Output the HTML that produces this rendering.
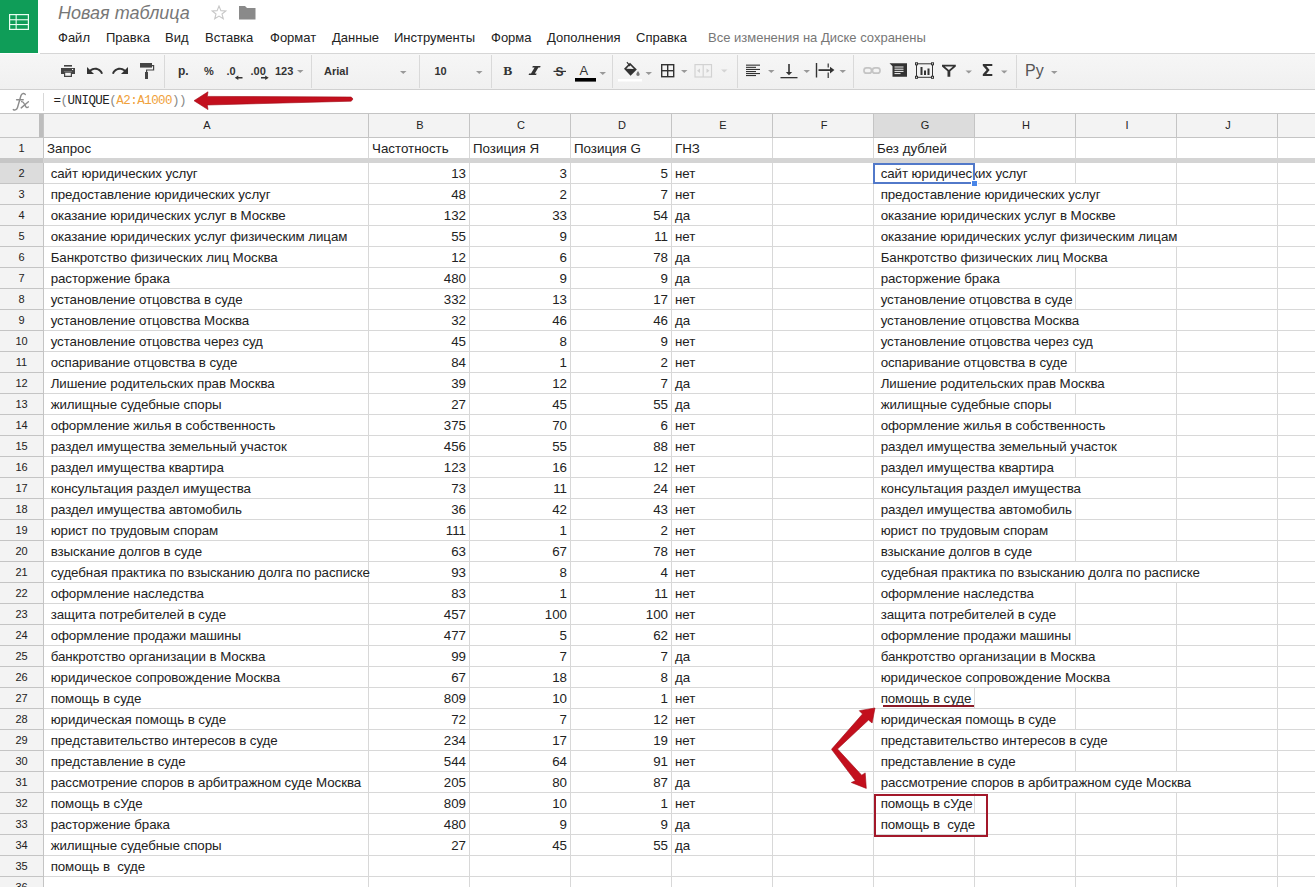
<!DOCTYPE html><html><head><meta charset="utf-8"><title>sheet</title><style>
*{margin:0;padding:0;box-sizing:border-box}
html,body{width:1315px;height:887px;overflow:hidden;background:#fff}
body{position:relative;font-family:"Liberation Sans",sans-serif;color:#222}
.a{position:absolute}
.hl{position:absolute;height:1px}
.vl{position:absolute;width:1px}
.t{position:absolute;white-space:pre;font-size:13.333px;line-height:20px;padding-top:1px;color:#222}
.ls{letter-spacing:-0.07px}
.n{text-align:right}
.rh{position:absolute;left:0;width:43px;text-align:center;font-size:11px;line-height:20px;color:#222}
.ch{position:absolute;top:114px;height:23px;text-align:center;font-size:11px;line-height:23px;color:#222}
.menu{position:absolute;top:30px;font-size:13px;line-height:16px;color:#222;white-space:pre}
.tb{position:absolute}
.dd{position:absolute;top:71px;width:0;height:0;border-left:3px solid transparent;border-right:3px solid transparent;border-top:3px solid #888}
.sep{position:absolute;top:56px;width:1px;height:31px;background:#e0e0e0}
</style></head><body>
<div class="a" style="left:0;top:0;width:38px;height:53px;background:#0f9d58"></div>
<svg class="a" style="left:0;top:0" width="38" height="53" viewBox="0 0 38 53"><g fill="#eafff2"><rect x="9" y="14" width="20" height="1.2"/><rect x="9" y="28.8" width="20" height="1.2"/><rect x="9" y="14" width="1.2" height="16"/><rect x="27.8" y="14" width="1.2" height="16"/><rect x="15.6" y="14" width="1.1" height="16"/><rect x="9" y="19.2" width="20" height="1.1"/><rect x="9" y="24" width="20" height="1.1"/></g></svg>
<div class="a" style="left:58px;top:2px;font-size:18px;line-height:22px;font-style:italic;color:#777;white-space:pre">Новая таблица</div>
<svg class="a" style="left:211px;top:5px" width="16" height="15" viewBox="0 0 16 15"><path d="M8 1 L9.9 5.6 L14.8 5.9 L11 9 L12.3 13.8 L8 11.1 L3.7 13.8 L5 9 L1.2 5.9 L6.1 5.6 Z" fill="none" stroke="#c8c8c8" stroke-width="1.1"/></svg>
<svg class="a" style="left:239px;top:5px" width="17" height="15" viewBox="0 0 17 15"><path d="M0 1 H6 L8 3 H16.5 V14.5 H0 Z" fill="#8a8a8a"/></svg>
<div class="menu" style="left:58px">Файл</div>
<div class="menu" style="left:106px">Правка</div>
<div class="menu" style="left:165px">Вид</div>
<div class="menu" style="left:205px">Вставка</div>
<div class="menu" style="left:270px">Формат</div>
<div class="menu" style="left:332px">Данные</div>
<div class="menu" style="left:394px">Инструменты</div>
<div class="menu" style="left:491px">Форма</div>
<div class="menu" style="left:547px">Дополнения</div>
<div class="menu" style="left:636px">Справка</div>
<div class="menu" style="left:708px;color:#777">Все изменения на Диске сохранены</div>
<div class="a" style="left:40px;top:53px;width:1275px;height:1px;background:#d6d6d6"></div>
<div class="a" style="left:0;top:54px;width:1315px;height:35px;background:linear-gradient(#f6f6f6,#f0f0f0)"></div>
<div class="a" style="left:0;top:89px;width:1315px;height:1px;background:#d0d0d0"></div>
<svg class="a" style="left:0;top:0" width="1315" height="90" viewBox="0 0 1315 90">
<g fill="#d9d9d9">
<rect x="164" y="55" width="1" height="33"/><rect x="311" y="55" width="1" height="33"/><rect x="419" y="55" width="1" height="33"/><rect x="491" y="55" width="1" height="33"/><rect x="612" y="55" width="1" height="33"/><rect x="737" y="55" width="1" height="33"/><rect x="853" y="55" width="1" height="33"/><rect x="1016" y="55" width="1" height="33"/>
</g>
<!-- print -->
<g fill="#444">
<rect x="64" y="65" width="8" height="1.6"/>
<path d="M61 68 H75 V74 H72 V71.5 H64 V74 H61 Z"/>
<path d="M64 71.5 H72 V77 H64 Z M65.2 72.7 V75.8 H70.8 V72.7 Z"/>
<rect x="72" y="69" width="1.2" height="1" fill="#fff"/>
</g>
<!-- undo -->
<path transform="translate(85.44 61.54) scale(0.78)" d="M12.5 8c-2.65 0-5.05.99-6.9 2.6L2 7v9h9l-3.62-3.62c1.39-1.16 3.16-1.88 5.12-1.88 3.54 0 6.55 2.31 7.6 5.5l2.37-.78C21.08 11.03 17.15 8 12.5 8z" fill="#333"/>
<!-- redo -->
<path transform="translate(110.84 61.54) scale(0.78)" d="M18.4 10.6C16.55 8.99 14.15 8 11.5 8c-4.65 0-8.58 3.03-9.96 7.22L3.9 16c1.05-3.19 4.05-5.5 7.6-5.5 1.95 0 3.73.72 5.12 1.88L13 16h9V7l-3.6 3.6z" fill="#333"/>
<!-- paint roller -->
<g fill="#444">
<rect x="140" y="63" width="12" height="4.6"/>
<path d="M152 65 H154.2 V70.6 H147.2 V72 H146 V69.5 H153 V66.2 H152 Z"/>
<rect x="145" y="72" width="3" height="7"/>
</g>
<g font-family="Liberation Sans" font-weight="bold" fill="#333">
<text x="178" y="75" font-size="12">р.</text>
<text x="204" y="75" font-size="11">%</text>
<text x="226.5" y="75" font-size="11">.0</text>
<text x="250.5" y="75" font-size="11">.00</text>
<text x="275" y="75" font-size="11">123</text>
<text x="324" y="75" font-size="11">Arial</text>
<text x="434.5" y="75" font-size="11">10</text>
</g>
<g fill="#333">
<path d="M234.8 77.8 L238.3 75.6 V77 H242.5 V78.6 H238.3 V80 Z"/>
<path d="M268.7 77.8 L265.2 75.6 V77 H261 V78.6 H265.2 V80 Z"/>
</g>
<!-- dropdown arrows -->
<g fill="#999">
<path d="M297 70 H303.5 L300.25 73 Z"/>
<path d="M400 71 H406.5 L403.25 74 Z"/>
<path d="M476 71 H482.5 L479.25 74 Z"/>
<path d="M599.5 72 H606 L602.75 75 Z"/>
<path d="M645.5 72 H652 L648.75 75 Z"/>
<path d="M681 70 H687.5 L684.25 73 Z"/>
<path d="M768 70 H774.5 L771.25 73 Z"/>
<path d="M803.5 70 H810 L806.75 73 Z"/>
<path d="M839.5 70 H846 L842.75 73 Z"/>
<path d="M965.5 70.5 H972 L968.75 73.5 Z"/>
<path d="M1001 70.5 H1007.5 L1004.25 73.5 Z"/>
<path d="M1051 71 H1057.5 L1054.25 74 Z"/>
</g>
<path d="M721 69.5 H727.5 L724.25 72.5 Z" fill="#d4d4d4"/>
<!-- B I S A -->
<text x="503.2" y="75.2" font-family="Liberation Serif" font-weight="bold" font-size="13.5" fill="#333">B</text>
<path d="M532.8 66 H540.6 L540.1 67.6 H538.4 L534.8 73.4 H536.6 L536.1 75 H528.6 L529.1 73.4 H531 L534.6 67.6 H532.3 Z" fill="#333"/>
<text x="555.6" y="75.5" font-family="Liberation Sans" font-weight="bold" font-size="12" fill="#333">S</text>
<rect x="553.5" y="70.8" width="12.5" height="1.2" fill="#333"/>
<text x="579.5" y="75" font-family="Liberation Sans" font-size="13" fill="#333">A</text>
<rect x="575" y="78" width="21" height="3.6" fill="#000"/>
<!-- bucket -->
<g fill="#333">
<path d="M624 68.8 L630 62.8 L636.8 69.6 L630.6 75.8 Z"/>
<path d="M626.3 68.8 L630 65.1 L633.9 69 Z" fill="#f3f3f3"/>
<path d="M629.5 66.5 L626.5 62.5 L627.3 61.8 L630.6 65.5 Z"/>
<path d="M638 71 C637 72.7 636.3 73.5 636.3 74.3 A1.7 1.7 0 0 0 639.7 74.3 C639.7 73.5 639 72.7 638 71 Z" fill="#777"/>
</g>
<rect x="618" y="79" width="24" height="2.5" fill="#fff"/>
<!-- borders -->
<g fill="none" stroke="#333" stroke-width="1.4">
<rect x="661.7" y="64.7" width="12" height="12"/><line x1="667.7" y1="64.7" x2="667.7" y2="76.7"/><line x1="661.7" y1="70.7" x2="673.7" y2="70.7"/>
</g>
<!-- merge (disabled) -->
<g fill="none" stroke="#d2d2d2" stroke-width="1.2">
<rect x="695" y="64.6" width="16.5" height="12.4"/><line x1="703.2" y1="64.6" x2="703.2" y2="77"/>
</g>
<g fill="#d2d2d2"><path d="M697 70.8 L700 68.5 V73.1 Z"/><path d="M709.5 70.8 L706.5 68.5 V73.1 Z"/></g>
<!-- align left -->
<g fill="#333">
<rect x="746" y="64.6" width="14" height="1.1"/><rect x="746" y="66.8" width="10" height="1.1"/><rect x="746" y="68.9" width="14" height="1.1"/><rect x="746" y="71" width="10" height="1.1"/><rect x="746" y="73" width="14" height="1.1"/><rect x="746" y="75" width="10" height="1.1"/>
</g>
<!-- valign bottom -->
<g fill="#333">
<rect x="788.2" y="64" width="1.6" height="9"/>
<path d="M785.8 72 H792.2 L789 75.2 Z"/>
<rect x="780.5" y="77" width="17" height="1.3"/>
</g>
<!-- wrap -->
<g fill="#333">
<rect x="815.8" y="63" width="1.4" height="14.5"/>
<rect x="818.5" y="69.2" width="12" height="1.8"/>
<path d="M830 66.8 L834.4 70.1 L830 73.4 Z"/>
<rect x="827.6" y="63.5" width="1.2" height="4"/><rect x="827.6" y="72.5" width="1.2" height="5.5"/>
</g>
<!-- link disabled -->
<g fill="none" stroke="#c4c4c4" stroke-width="1.7">
<rect x="864" y="67.8" width="7.5" height="5.4" rx="2.5"/><rect x="872.5" y="67.8" width="7.5" height="5.4" rx="2.5"/>
</g>
<!-- comment -->
<path d="M889.5 63.2 H907 V76.8 H892.5 V66.2 Z" fill="#333"/>
<g fill="#f3f3f3"><rect x="894.5" y="66.5" width="9" height="1"/><rect x="894.5" y="68.7" width="9" height="1"/><rect x="894.5" y="70.9" width="9" height="1"/><rect x="894.5" y="73.1" width="6" height="1"/></g>
<!-- chart -->
<g fill="none" stroke="#333" stroke-width="1"><rect x="916.5" y="63.8" width="16" height="13.5"/></g>
<g fill="#333">
<rect x="915" y="62.3" width="3" height="3"/><rect x="931" y="62.3" width="3" height="3"/><rect x="915" y="75.8" width="3" height="3"/><rect x="931" y="75.8" width="3" height="3"/>
<rect x="920.5" y="67" width="2" height="8"/><rect x="924" y="70.5" width="2" height="4.5"/><rect x="927.5" y="68.5" width="2" height="6.5"/>
</g>
<g fill="#f3f3f3"><rect x="916" y="63.3" width="1" height="1"/><rect x="932" y="63.3" width="1" height="1"/><rect x="916" y="76.8" width="1" height="1"/><rect x="932" y="76.8" width="1" height="1"/></g>
<!-- filter -->
<path d="M942 64.8 H955.8 V66.6 L950.3 71.2 V76.8 H947.5 V71.2 L942 66.6 Z M944.8 66.6 L948.9 70 L953 66.6 Z" fill="#333" fill-rule="evenodd"/>
<!-- sigma -->
<path d="M982.8 64 H992.3 V66.1 H986.3 L989.6 70 L986.3 73.9 H992.3 V76 H982.8 V74.2 L986.6 70 L982.8 65.8 Z" fill="#333"/>
<text x="1025" y="76" font-family="Liberation Sans" font-size="16" fill="#555">Ру</text>
</svg>

<svg class="a" style="left:0;top:88px" width="43" height="25" viewBox="0 88 43 25"><g fill="none" stroke="#8c8c8c" stroke-width="1.4" stroke-linecap="round"><path d="M25.3 94.6 C24.6 92.9 21.7 92.9 20.9 95.8 L17.6 107.3 C17 109.6 15 110.6 13.3 109.6"/><path d="M16.6 99.8 H23.2"/><path d="M21.6 101.6 C23 101.4 23.6 102.2 24.4 104 L25.6 106.4 C26.3 107.6 27.2 107.8 28.4 107"/><path d="M28.4 101.8 L21.2 107.9"/></g></svg>
<div class="a" style="left:43px;top:93px;width:1px;height:18px;background:#d8d8d8"></div>
<div class="a" style="left:53.5px;top:92px;font-family:'Liberation Mono',monospace;font-size:12.5px;letter-spacing:-0.53px;line-height:18px;white-space:pre;color:#222">=<span style="color:#888">(</span>UNIQUE<span style="color:#888">(</span><span style="color:#f0a23c">A2:A1000</span><span style="color:#888">))</span></div>
<div class="a" style="left:0;top:113px;width:1315px;height:1px;background:#c4c4c4"></div>
<div class="a" style="left:0;top:114px;width:1315px;height:23px;background:#f3f3f3"></div>
<div class="a" style="left:874px;top:114px;width:100px;height:23px;background:#dcdcdc"></div>
<div class="a" style="left:0;top:137px;width:1315px;height:1px;background:#c4c4c4"></div>
<div class="a" style="left:0;top:138px;width:43px;height:749px;background:#f3f3f3"></div>
<div class="a" style="left:0;top:163px;width:43px;height:20px;background:#dcdcdc"></div>
<div class="vl" style="left:368px;top:113px;height:24px;background:#c4c4c4"></div>
<div class="vl" style="left:469px;top:113px;height:24px;background:#c4c4c4"></div>
<div class="vl" style="left:570px;top:113px;height:24px;background:#c4c4c4"></div>
<div class="vl" style="left:671px;top:113px;height:24px;background:#c4c4c4"></div>
<div class="vl" style="left:772px;top:113px;height:24px;background:#c4c4c4"></div>
<div class="vl" style="left:873px;top:113px;height:24px;background:#c4c4c4"></div>
<div class="vl" style="left:974px;top:113px;height:24px;background:#c4c4c4"></div>
<div class="vl" style="left:1075px;top:113px;height:24px;background:#c4c4c4"></div>
<div class="vl" style="left:1176px;top:113px;height:24px;background:#c4c4c4"></div>
<div class="vl" style="left:1277px;top:113px;height:24px;background:#c4c4c4"></div>
<div class="vl" style="left:43px;top:113px;height:774px;background:#c4c4c4"></div>
<div class="a" style="left:39px;top:114px;width:4px;height:23px;background:#bdbdbd"></div>
<div class="ch" style="left:45px;width:324px">A</div>
<div class="ch" style="left:370px;width:100px">B</div>
<div class="ch" style="left:471px;width:100px">C</div>
<div class="ch" style="left:572px;width:100px">D</div>
<div class="ch" style="left:673px;width:100px">E</div>
<div class="ch" style="left:774px;width:100px">F</div>
<div class="ch" style="left:875px;width:100px">G</div>
<div class="ch" style="left:976px;width:100px">H</div>
<div class="ch" style="left:1077px;width:100px">I</div>
<div class="ch" style="left:1178px;width:100px">J</div>
<div class="a" style="left:0;top:158px;width:1315px;height:5px;background:#d4d4d4"></div>
<div class="a" style="left:0;top:158px;width:43px;height:5px;background:#c6c6c6"></div>
<div class="hl" style="left:0;top:183px;width:43px;background:#c4c4c4"></div>
<div class="hl" style="left:44px;top:183px;width:1271px;background:#d8d8d8"></div>
<div class="hl" style="left:0;top:204px;width:43px;background:#c4c4c4"></div>
<div class="hl" style="left:44px;top:204px;width:1271px;background:#d8d8d8"></div>
<div class="hl" style="left:0;top:225px;width:43px;background:#c4c4c4"></div>
<div class="hl" style="left:44px;top:225px;width:1271px;background:#d8d8d8"></div>
<div class="hl" style="left:0;top:246px;width:43px;background:#c4c4c4"></div>
<div class="hl" style="left:44px;top:246px;width:1271px;background:#d8d8d8"></div>
<div class="hl" style="left:0;top:267px;width:43px;background:#c4c4c4"></div>
<div class="hl" style="left:44px;top:267px;width:1271px;background:#d8d8d8"></div>
<div class="hl" style="left:0;top:288px;width:43px;background:#c4c4c4"></div>
<div class="hl" style="left:44px;top:288px;width:1271px;background:#d8d8d8"></div>
<div class="hl" style="left:0;top:309px;width:43px;background:#c4c4c4"></div>
<div class="hl" style="left:44px;top:309px;width:1271px;background:#d8d8d8"></div>
<div class="hl" style="left:0;top:330px;width:43px;background:#c4c4c4"></div>
<div class="hl" style="left:44px;top:330px;width:1271px;background:#d8d8d8"></div>
<div class="hl" style="left:0;top:351px;width:43px;background:#c4c4c4"></div>
<div class="hl" style="left:44px;top:351px;width:1271px;background:#d8d8d8"></div>
<div class="hl" style="left:0;top:372px;width:43px;background:#c4c4c4"></div>
<div class="hl" style="left:44px;top:372px;width:1271px;background:#d8d8d8"></div>
<div class="hl" style="left:0;top:393px;width:43px;background:#c4c4c4"></div>
<div class="hl" style="left:44px;top:393px;width:1271px;background:#d8d8d8"></div>
<div class="hl" style="left:0;top:414px;width:43px;background:#c4c4c4"></div>
<div class="hl" style="left:44px;top:414px;width:1271px;background:#d8d8d8"></div>
<div class="hl" style="left:0;top:435px;width:43px;background:#c4c4c4"></div>
<div class="hl" style="left:44px;top:435px;width:1271px;background:#d8d8d8"></div>
<div class="hl" style="left:0;top:456px;width:43px;background:#c4c4c4"></div>
<div class="hl" style="left:44px;top:456px;width:1271px;background:#d8d8d8"></div>
<div class="hl" style="left:0;top:477px;width:43px;background:#c4c4c4"></div>
<div class="hl" style="left:44px;top:477px;width:1271px;background:#d8d8d8"></div>
<div class="hl" style="left:0;top:498px;width:43px;background:#c4c4c4"></div>
<div class="hl" style="left:44px;top:498px;width:1271px;background:#d8d8d8"></div>
<div class="hl" style="left:0;top:519px;width:43px;background:#c4c4c4"></div>
<div class="hl" style="left:44px;top:519px;width:1271px;background:#d8d8d8"></div>
<div class="hl" style="left:0;top:540px;width:43px;background:#c4c4c4"></div>
<div class="hl" style="left:44px;top:540px;width:1271px;background:#d8d8d8"></div>
<div class="hl" style="left:0;top:561px;width:43px;background:#c4c4c4"></div>
<div class="hl" style="left:44px;top:561px;width:1271px;background:#d8d8d8"></div>
<div class="hl" style="left:0;top:582px;width:43px;background:#c4c4c4"></div>
<div class="hl" style="left:44px;top:582px;width:1271px;background:#d8d8d8"></div>
<div class="hl" style="left:0;top:603px;width:43px;background:#c4c4c4"></div>
<div class="hl" style="left:44px;top:603px;width:1271px;background:#d8d8d8"></div>
<div class="hl" style="left:0;top:624px;width:43px;background:#c4c4c4"></div>
<div class="hl" style="left:44px;top:624px;width:1271px;background:#d8d8d8"></div>
<div class="hl" style="left:0;top:645px;width:43px;background:#c4c4c4"></div>
<div class="hl" style="left:44px;top:645px;width:1271px;background:#d8d8d8"></div>
<div class="hl" style="left:0;top:666px;width:43px;background:#c4c4c4"></div>
<div class="hl" style="left:44px;top:666px;width:1271px;background:#d8d8d8"></div>
<div class="hl" style="left:0;top:687px;width:43px;background:#c4c4c4"></div>
<div class="hl" style="left:44px;top:687px;width:1271px;background:#d8d8d8"></div>
<div class="hl" style="left:0;top:708px;width:43px;background:#c4c4c4"></div>
<div class="hl" style="left:44px;top:708px;width:1271px;background:#d8d8d8"></div>
<div class="hl" style="left:0;top:729px;width:43px;background:#c4c4c4"></div>
<div class="hl" style="left:44px;top:729px;width:1271px;background:#d8d8d8"></div>
<div class="hl" style="left:0;top:750px;width:43px;background:#c4c4c4"></div>
<div class="hl" style="left:44px;top:750px;width:1271px;background:#d8d8d8"></div>
<div class="hl" style="left:0;top:771px;width:43px;background:#c4c4c4"></div>
<div class="hl" style="left:44px;top:771px;width:1271px;background:#d8d8d8"></div>
<div class="hl" style="left:0;top:792px;width:43px;background:#c4c4c4"></div>
<div class="hl" style="left:44px;top:792px;width:1271px;background:#d8d8d8"></div>
<div class="hl" style="left:0;top:813px;width:43px;background:#c4c4c4"></div>
<div class="hl" style="left:44px;top:813px;width:1271px;background:#d8d8d8"></div>
<div class="hl" style="left:0;top:834px;width:43px;background:#c4c4c4"></div>
<div class="hl" style="left:44px;top:834px;width:1271px;background:#d8d8d8"></div>
<div class="hl" style="left:0;top:855px;width:43px;background:#c4c4c4"></div>
<div class="hl" style="left:44px;top:855px;width:1271px;background:#d8d8d8"></div>
<div class="hl" style="left:0;top:876px;width:43px;background:#c4c4c4"></div>
<div class="hl" style="left:44px;top:876px;width:1271px;background:#d8d8d8"></div>
<div class="vl" style="left:368px;top:138px;height:20px;background:#d8d8d8"></div>
<div class="vl" style="left:469px;top:138px;height:20px;background:#d8d8d8"></div>
<div class="vl" style="left:570px;top:138px;height:20px;background:#d8d8d8"></div>
<div class="vl" style="left:671px;top:138px;height:20px;background:#d8d8d8"></div>
<div class="vl" style="left:772px;top:138px;height:20px;background:#d8d8d8"></div>
<div class="vl" style="left:873px;top:138px;height:20px;background:#d8d8d8"></div>
<div class="vl" style="left:974px;top:138px;height:20px;background:#d8d8d8"></div>
<div class="vl" style="left:1075px;top:138px;height:20px;background:#d8d8d8"></div>
<div class="vl" style="left:1176px;top:138px;height:20px;background:#d8d8d8"></div>
<div class="vl" style="left:1277px;top:138px;height:20px;background:#d8d8d8"></div>
<div class="vl" style="left:368px;top:163px;height:20px;background:#d8d8d8"></div>
<div class="vl" style="left:469px;top:163px;height:20px;background:#d8d8d8"></div>
<div class="vl" style="left:570px;top:163px;height:20px;background:#d8d8d8"></div>
<div class="vl" style="left:671px;top:163px;height:20px;background:#d8d8d8"></div>
<div class="vl" style="left:772px;top:163px;height:20px;background:#d8d8d8"></div>
<div class="vl" style="left:873px;top:163px;height:20px;background:#d8d8d8"></div>
<div class="vl" style="left:1075px;top:163px;height:20px;background:#d8d8d8"></div>
<div class="vl" style="left:1176px;top:163px;height:20px;background:#d8d8d8"></div>
<div class="vl" style="left:1277px;top:163px;height:20px;background:#d8d8d8"></div>
<div class="vl" style="left:368px;top:184px;height:20px;background:#d8d8d8"></div>
<div class="vl" style="left:469px;top:184px;height:20px;background:#d8d8d8"></div>
<div class="vl" style="left:570px;top:184px;height:20px;background:#d8d8d8"></div>
<div class="vl" style="left:671px;top:184px;height:20px;background:#d8d8d8"></div>
<div class="vl" style="left:772px;top:184px;height:20px;background:#d8d8d8"></div>
<div class="vl" style="left:873px;top:184px;height:20px;background:#d8d8d8"></div>
<div class="vl" style="left:1176px;top:184px;height:20px;background:#d8d8d8"></div>
<div class="vl" style="left:1277px;top:184px;height:20px;background:#d8d8d8"></div>
<div class="vl" style="left:368px;top:205px;height:20px;background:#d8d8d8"></div>
<div class="vl" style="left:469px;top:205px;height:20px;background:#d8d8d8"></div>
<div class="vl" style="left:570px;top:205px;height:20px;background:#d8d8d8"></div>
<div class="vl" style="left:671px;top:205px;height:20px;background:#d8d8d8"></div>
<div class="vl" style="left:772px;top:205px;height:20px;background:#d8d8d8"></div>
<div class="vl" style="left:873px;top:205px;height:20px;background:#d8d8d8"></div>
<div class="vl" style="left:1176px;top:205px;height:20px;background:#d8d8d8"></div>
<div class="vl" style="left:1277px;top:205px;height:20px;background:#d8d8d8"></div>
<div class="vl" style="left:368px;top:226px;height:20px;background:#d8d8d8"></div>
<div class="vl" style="left:469px;top:226px;height:20px;background:#d8d8d8"></div>
<div class="vl" style="left:570px;top:226px;height:20px;background:#d8d8d8"></div>
<div class="vl" style="left:671px;top:226px;height:20px;background:#d8d8d8"></div>
<div class="vl" style="left:772px;top:226px;height:20px;background:#d8d8d8"></div>
<div class="vl" style="left:873px;top:226px;height:20px;background:#d8d8d8"></div>
<div class="vl" style="left:1277px;top:226px;height:20px;background:#d8d8d8"></div>
<div class="vl" style="left:368px;top:247px;height:20px;background:#d8d8d8"></div>
<div class="vl" style="left:469px;top:247px;height:20px;background:#d8d8d8"></div>
<div class="vl" style="left:570px;top:247px;height:20px;background:#d8d8d8"></div>
<div class="vl" style="left:671px;top:247px;height:20px;background:#d8d8d8"></div>
<div class="vl" style="left:772px;top:247px;height:20px;background:#d8d8d8"></div>
<div class="vl" style="left:873px;top:247px;height:20px;background:#d8d8d8"></div>
<div class="vl" style="left:1176px;top:247px;height:20px;background:#d8d8d8"></div>
<div class="vl" style="left:1277px;top:247px;height:20px;background:#d8d8d8"></div>
<div class="vl" style="left:368px;top:268px;height:20px;background:#d8d8d8"></div>
<div class="vl" style="left:469px;top:268px;height:20px;background:#d8d8d8"></div>
<div class="vl" style="left:570px;top:268px;height:20px;background:#d8d8d8"></div>
<div class="vl" style="left:671px;top:268px;height:20px;background:#d8d8d8"></div>
<div class="vl" style="left:772px;top:268px;height:20px;background:#d8d8d8"></div>
<div class="vl" style="left:873px;top:268px;height:20px;background:#d8d8d8"></div>
<div class="vl" style="left:1075px;top:268px;height:20px;background:#d8d8d8"></div>
<div class="vl" style="left:1176px;top:268px;height:20px;background:#d8d8d8"></div>
<div class="vl" style="left:1277px;top:268px;height:20px;background:#d8d8d8"></div>
<div class="vl" style="left:368px;top:289px;height:20px;background:#d8d8d8"></div>
<div class="vl" style="left:469px;top:289px;height:20px;background:#d8d8d8"></div>
<div class="vl" style="left:570px;top:289px;height:20px;background:#d8d8d8"></div>
<div class="vl" style="left:671px;top:289px;height:20px;background:#d8d8d8"></div>
<div class="vl" style="left:772px;top:289px;height:20px;background:#d8d8d8"></div>
<div class="vl" style="left:873px;top:289px;height:20px;background:#d8d8d8"></div>
<div class="vl" style="left:1075px;top:289px;height:20px;background:#d8d8d8"></div>
<div class="vl" style="left:1176px;top:289px;height:20px;background:#d8d8d8"></div>
<div class="vl" style="left:1277px;top:289px;height:20px;background:#d8d8d8"></div>
<div class="vl" style="left:368px;top:310px;height:20px;background:#d8d8d8"></div>
<div class="vl" style="left:469px;top:310px;height:20px;background:#d8d8d8"></div>
<div class="vl" style="left:570px;top:310px;height:20px;background:#d8d8d8"></div>
<div class="vl" style="left:671px;top:310px;height:20px;background:#d8d8d8"></div>
<div class="vl" style="left:772px;top:310px;height:20px;background:#d8d8d8"></div>
<div class="vl" style="left:873px;top:310px;height:20px;background:#d8d8d8"></div>
<div class="vl" style="left:1176px;top:310px;height:20px;background:#d8d8d8"></div>
<div class="vl" style="left:1277px;top:310px;height:20px;background:#d8d8d8"></div>
<div class="vl" style="left:368px;top:331px;height:20px;background:#d8d8d8"></div>
<div class="vl" style="left:469px;top:331px;height:20px;background:#d8d8d8"></div>
<div class="vl" style="left:570px;top:331px;height:20px;background:#d8d8d8"></div>
<div class="vl" style="left:671px;top:331px;height:20px;background:#d8d8d8"></div>
<div class="vl" style="left:772px;top:331px;height:20px;background:#d8d8d8"></div>
<div class="vl" style="left:873px;top:331px;height:20px;background:#d8d8d8"></div>
<div class="vl" style="left:1176px;top:331px;height:20px;background:#d8d8d8"></div>
<div class="vl" style="left:1277px;top:331px;height:20px;background:#d8d8d8"></div>
<div class="vl" style="left:368px;top:352px;height:20px;background:#d8d8d8"></div>
<div class="vl" style="left:469px;top:352px;height:20px;background:#d8d8d8"></div>
<div class="vl" style="left:570px;top:352px;height:20px;background:#d8d8d8"></div>
<div class="vl" style="left:671px;top:352px;height:20px;background:#d8d8d8"></div>
<div class="vl" style="left:772px;top:352px;height:20px;background:#d8d8d8"></div>
<div class="vl" style="left:873px;top:352px;height:20px;background:#d8d8d8"></div>
<div class="vl" style="left:1075px;top:352px;height:20px;background:#d8d8d8"></div>
<div class="vl" style="left:1176px;top:352px;height:20px;background:#d8d8d8"></div>
<div class="vl" style="left:1277px;top:352px;height:20px;background:#d8d8d8"></div>
<div class="vl" style="left:368px;top:373px;height:20px;background:#d8d8d8"></div>
<div class="vl" style="left:469px;top:373px;height:20px;background:#d8d8d8"></div>
<div class="vl" style="left:570px;top:373px;height:20px;background:#d8d8d8"></div>
<div class="vl" style="left:671px;top:373px;height:20px;background:#d8d8d8"></div>
<div class="vl" style="left:772px;top:373px;height:20px;background:#d8d8d8"></div>
<div class="vl" style="left:873px;top:373px;height:20px;background:#d8d8d8"></div>
<div class="vl" style="left:1176px;top:373px;height:20px;background:#d8d8d8"></div>
<div class="vl" style="left:1277px;top:373px;height:20px;background:#d8d8d8"></div>
<div class="vl" style="left:368px;top:394px;height:20px;background:#d8d8d8"></div>
<div class="vl" style="left:469px;top:394px;height:20px;background:#d8d8d8"></div>
<div class="vl" style="left:570px;top:394px;height:20px;background:#d8d8d8"></div>
<div class="vl" style="left:671px;top:394px;height:20px;background:#d8d8d8"></div>
<div class="vl" style="left:772px;top:394px;height:20px;background:#d8d8d8"></div>
<div class="vl" style="left:873px;top:394px;height:20px;background:#d8d8d8"></div>
<div class="vl" style="left:1075px;top:394px;height:20px;background:#d8d8d8"></div>
<div class="vl" style="left:1176px;top:394px;height:20px;background:#d8d8d8"></div>
<div class="vl" style="left:1277px;top:394px;height:20px;background:#d8d8d8"></div>
<div class="vl" style="left:368px;top:415px;height:20px;background:#d8d8d8"></div>
<div class="vl" style="left:469px;top:415px;height:20px;background:#d8d8d8"></div>
<div class="vl" style="left:570px;top:415px;height:20px;background:#d8d8d8"></div>
<div class="vl" style="left:671px;top:415px;height:20px;background:#d8d8d8"></div>
<div class="vl" style="left:772px;top:415px;height:20px;background:#d8d8d8"></div>
<div class="vl" style="left:873px;top:415px;height:20px;background:#d8d8d8"></div>
<div class="vl" style="left:1176px;top:415px;height:20px;background:#d8d8d8"></div>
<div class="vl" style="left:1277px;top:415px;height:20px;background:#d8d8d8"></div>
<div class="vl" style="left:368px;top:436px;height:20px;background:#d8d8d8"></div>
<div class="vl" style="left:469px;top:436px;height:20px;background:#d8d8d8"></div>
<div class="vl" style="left:570px;top:436px;height:20px;background:#d8d8d8"></div>
<div class="vl" style="left:671px;top:436px;height:20px;background:#d8d8d8"></div>
<div class="vl" style="left:772px;top:436px;height:20px;background:#d8d8d8"></div>
<div class="vl" style="left:873px;top:436px;height:20px;background:#d8d8d8"></div>
<div class="vl" style="left:1176px;top:436px;height:20px;background:#d8d8d8"></div>
<div class="vl" style="left:1277px;top:436px;height:20px;background:#d8d8d8"></div>
<div class="vl" style="left:368px;top:457px;height:20px;background:#d8d8d8"></div>
<div class="vl" style="left:469px;top:457px;height:20px;background:#d8d8d8"></div>
<div class="vl" style="left:570px;top:457px;height:20px;background:#d8d8d8"></div>
<div class="vl" style="left:671px;top:457px;height:20px;background:#d8d8d8"></div>
<div class="vl" style="left:772px;top:457px;height:20px;background:#d8d8d8"></div>
<div class="vl" style="left:873px;top:457px;height:20px;background:#d8d8d8"></div>
<div class="vl" style="left:1075px;top:457px;height:20px;background:#d8d8d8"></div>
<div class="vl" style="left:1176px;top:457px;height:20px;background:#d8d8d8"></div>
<div class="vl" style="left:1277px;top:457px;height:20px;background:#d8d8d8"></div>
<div class="vl" style="left:368px;top:478px;height:20px;background:#d8d8d8"></div>
<div class="vl" style="left:469px;top:478px;height:20px;background:#d8d8d8"></div>
<div class="vl" style="left:570px;top:478px;height:20px;background:#d8d8d8"></div>
<div class="vl" style="left:671px;top:478px;height:20px;background:#d8d8d8"></div>
<div class="vl" style="left:772px;top:478px;height:20px;background:#d8d8d8"></div>
<div class="vl" style="left:873px;top:478px;height:20px;background:#d8d8d8"></div>
<div class="vl" style="left:1176px;top:478px;height:20px;background:#d8d8d8"></div>
<div class="vl" style="left:1277px;top:478px;height:20px;background:#d8d8d8"></div>
<div class="vl" style="left:368px;top:499px;height:20px;background:#d8d8d8"></div>
<div class="vl" style="left:469px;top:499px;height:20px;background:#d8d8d8"></div>
<div class="vl" style="left:570px;top:499px;height:20px;background:#d8d8d8"></div>
<div class="vl" style="left:671px;top:499px;height:20px;background:#d8d8d8"></div>
<div class="vl" style="left:772px;top:499px;height:20px;background:#d8d8d8"></div>
<div class="vl" style="left:873px;top:499px;height:20px;background:#d8d8d8"></div>
<div class="vl" style="left:1075px;top:499px;height:20px;background:#d8d8d8"></div>
<div class="vl" style="left:1176px;top:499px;height:20px;background:#d8d8d8"></div>
<div class="vl" style="left:1277px;top:499px;height:20px;background:#d8d8d8"></div>
<div class="vl" style="left:368px;top:520px;height:20px;background:#d8d8d8"></div>
<div class="vl" style="left:469px;top:520px;height:20px;background:#d8d8d8"></div>
<div class="vl" style="left:570px;top:520px;height:20px;background:#d8d8d8"></div>
<div class="vl" style="left:671px;top:520px;height:20px;background:#d8d8d8"></div>
<div class="vl" style="left:772px;top:520px;height:20px;background:#d8d8d8"></div>
<div class="vl" style="left:873px;top:520px;height:20px;background:#d8d8d8"></div>
<div class="vl" style="left:1075px;top:520px;height:20px;background:#d8d8d8"></div>
<div class="vl" style="left:1176px;top:520px;height:20px;background:#d8d8d8"></div>
<div class="vl" style="left:1277px;top:520px;height:20px;background:#d8d8d8"></div>
<div class="vl" style="left:368px;top:541px;height:20px;background:#d8d8d8"></div>
<div class="vl" style="left:469px;top:541px;height:20px;background:#d8d8d8"></div>
<div class="vl" style="left:570px;top:541px;height:20px;background:#d8d8d8"></div>
<div class="vl" style="left:671px;top:541px;height:20px;background:#d8d8d8"></div>
<div class="vl" style="left:772px;top:541px;height:20px;background:#d8d8d8"></div>
<div class="vl" style="left:873px;top:541px;height:20px;background:#d8d8d8"></div>
<div class="vl" style="left:1075px;top:541px;height:20px;background:#d8d8d8"></div>
<div class="vl" style="left:1176px;top:541px;height:20px;background:#d8d8d8"></div>
<div class="vl" style="left:1277px;top:541px;height:20px;background:#d8d8d8"></div>
<div class="vl" style="left:368px;top:562px;height:20px;background:#d8d8d8"></div>
<div class="vl" style="left:469px;top:562px;height:20px;background:#d8d8d8"></div>
<div class="vl" style="left:570px;top:562px;height:20px;background:#d8d8d8"></div>
<div class="vl" style="left:671px;top:562px;height:20px;background:#d8d8d8"></div>
<div class="vl" style="left:772px;top:562px;height:20px;background:#d8d8d8"></div>
<div class="vl" style="left:873px;top:562px;height:20px;background:#d8d8d8"></div>
<div class="vl" style="left:1277px;top:562px;height:20px;background:#d8d8d8"></div>
<div class="vl" style="left:368px;top:583px;height:20px;background:#d8d8d8"></div>
<div class="vl" style="left:469px;top:583px;height:20px;background:#d8d8d8"></div>
<div class="vl" style="left:570px;top:583px;height:20px;background:#d8d8d8"></div>
<div class="vl" style="left:671px;top:583px;height:20px;background:#d8d8d8"></div>
<div class="vl" style="left:772px;top:583px;height:20px;background:#d8d8d8"></div>
<div class="vl" style="left:873px;top:583px;height:20px;background:#d8d8d8"></div>
<div class="vl" style="left:1075px;top:583px;height:20px;background:#d8d8d8"></div>
<div class="vl" style="left:1176px;top:583px;height:20px;background:#d8d8d8"></div>
<div class="vl" style="left:1277px;top:583px;height:20px;background:#d8d8d8"></div>
<div class="vl" style="left:368px;top:604px;height:20px;background:#d8d8d8"></div>
<div class="vl" style="left:469px;top:604px;height:20px;background:#d8d8d8"></div>
<div class="vl" style="left:570px;top:604px;height:20px;background:#d8d8d8"></div>
<div class="vl" style="left:671px;top:604px;height:20px;background:#d8d8d8"></div>
<div class="vl" style="left:772px;top:604px;height:20px;background:#d8d8d8"></div>
<div class="vl" style="left:873px;top:604px;height:20px;background:#d8d8d8"></div>
<div class="vl" style="left:1075px;top:604px;height:20px;background:#d8d8d8"></div>
<div class="vl" style="left:1176px;top:604px;height:20px;background:#d8d8d8"></div>
<div class="vl" style="left:1277px;top:604px;height:20px;background:#d8d8d8"></div>
<div class="vl" style="left:368px;top:625px;height:20px;background:#d8d8d8"></div>
<div class="vl" style="left:469px;top:625px;height:20px;background:#d8d8d8"></div>
<div class="vl" style="left:570px;top:625px;height:20px;background:#d8d8d8"></div>
<div class="vl" style="left:671px;top:625px;height:20px;background:#d8d8d8"></div>
<div class="vl" style="left:772px;top:625px;height:20px;background:#d8d8d8"></div>
<div class="vl" style="left:873px;top:625px;height:20px;background:#d8d8d8"></div>
<div class="vl" style="left:1075px;top:625px;height:20px;background:#d8d8d8"></div>
<div class="vl" style="left:1176px;top:625px;height:20px;background:#d8d8d8"></div>
<div class="vl" style="left:1277px;top:625px;height:20px;background:#d8d8d8"></div>
<div class="vl" style="left:368px;top:646px;height:20px;background:#d8d8d8"></div>
<div class="vl" style="left:469px;top:646px;height:20px;background:#d8d8d8"></div>
<div class="vl" style="left:570px;top:646px;height:20px;background:#d8d8d8"></div>
<div class="vl" style="left:671px;top:646px;height:20px;background:#d8d8d8"></div>
<div class="vl" style="left:772px;top:646px;height:20px;background:#d8d8d8"></div>
<div class="vl" style="left:873px;top:646px;height:20px;background:#d8d8d8"></div>
<div class="vl" style="left:1176px;top:646px;height:20px;background:#d8d8d8"></div>
<div class="vl" style="left:1277px;top:646px;height:20px;background:#d8d8d8"></div>
<div class="vl" style="left:368px;top:667px;height:20px;background:#d8d8d8"></div>
<div class="vl" style="left:469px;top:667px;height:20px;background:#d8d8d8"></div>
<div class="vl" style="left:570px;top:667px;height:20px;background:#d8d8d8"></div>
<div class="vl" style="left:671px;top:667px;height:20px;background:#d8d8d8"></div>
<div class="vl" style="left:772px;top:667px;height:20px;background:#d8d8d8"></div>
<div class="vl" style="left:873px;top:667px;height:20px;background:#d8d8d8"></div>
<div class="vl" style="left:1176px;top:667px;height:20px;background:#d8d8d8"></div>
<div class="vl" style="left:1277px;top:667px;height:20px;background:#d8d8d8"></div>
<div class="vl" style="left:368px;top:688px;height:20px;background:#d8d8d8"></div>
<div class="vl" style="left:469px;top:688px;height:20px;background:#d8d8d8"></div>
<div class="vl" style="left:570px;top:688px;height:20px;background:#d8d8d8"></div>
<div class="vl" style="left:671px;top:688px;height:20px;background:#d8d8d8"></div>
<div class="vl" style="left:772px;top:688px;height:20px;background:#d8d8d8"></div>
<div class="vl" style="left:873px;top:688px;height:20px;background:#d8d8d8"></div>
<div class="vl" style="left:974px;top:688px;height:20px;background:#d8d8d8"></div>
<div class="vl" style="left:1075px;top:688px;height:20px;background:#d8d8d8"></div>
<div class="vl" style="left:1176px;top:688px;height:20px;background:#d8d8d8"></div>
<div class="vl" style="left:1277px;top:688px;height:20px;background:#d8d8d8"></div>
<div class="vl" style="left:368px;top:709px;height:20px;background:#d8d8d8"></div>
<div class="vl" style="left:469px;top:709px;height:20px;background:#d8d8d8"></div>
<div class="vl" style="left:570px;top:709px;height:20px;background:#d8d8d8"></div>
<div class="vl" style="left:671px;top:709px;height:20px;background:#d8d8d8"></div>
<div class="vl" style="left:772px;top:709px;height:20px;background:#d8d8d8"></div>
<div class="vl" style="left:873px;top:709px;height:20px;background:#d8d8d8"></div>
<div class="vl" style="left:1075px;top:709px;height:20px;background:#d8d8d8"></div>
<div class="vl" style="left:1176px;top:709px;height:20px;background:#d8d8d8"></div>
<div class="vl" style="left:1277px;top:709px;height:20px;background:#d8d8d8"></div>
<div class="vl" style="left:368px;top:730px;height:20px;background:#d8d8d8"></div>
<div class="vl" style="left:469px;top:730px;height:20px;background:#d8d8d8"></div>
<div class="vl" style="left:570px;top:730px;height:20px;background:#d8d8d8"></div>
<div class="vl" style="left:671px;top:730px;height:20px;background:#d8d8d8"></div>
<div class="vl" style="left:772px;top:730px;height:20px;background:#d8d8d8"></div>
<div class="vl" style="left:873px;top:730px;height:20px;background:#d8d8d8"></div>
<div class="vl" style="left:1176px;top:730px;height:20px;background:#d8d8d8"></div>
<div class="vl" style="left:1277px;top:730px;height:20px;background:#d8d8d8"></div>
<div class="vl" style="left:368px;top:751px;height:20px;background:#d8d8d8"></div>
<div class="vl" style="left:469px;top:751px;height:20px;background:#d8d8d8"></div>
<div class="vl" style="left:570px;top:751px;height:20px;background:#d8d8d8"></div>
<div class="vl" style="left:671px;top:751px;height:20px;background:#d8d8d8"></div>
<div class="vl" style="left:772px;top:751px;height:20px;background:#d8d8d8"></div>
<div class="vl" style="left:873px;top:751px;height:20px;background:#d8d8d8"></div>
<div class="vl" style="left:1075px;top:751px;height:20px;background:#d8d8d8"></div>
<div class="vl" style="left:1176px;top:751px;height:20px;background:#d8d8d8"></div>
<div class="vl" style="left:1277px;top:751px;height:20px;background:#d8d8d8"></div>
<div class="vl" style="left:368px;top:772px;height:20px;background:#d8d8d8"></div>
<div class="vl" style="left:469px;top:772px;height:20px;background:#d8d8d8"></div>
<div class="vl" style="left:570px;top:772px;height:20px;background:#d8d8d8"></div>
<div class="vl" style="left:671px;top:772px;height:20px;background:#d8d8d8"></div>
<div class="vl" style="left:772px;top:772px;height:20px;background:#d8d8d8"></div>
<div class="vl" style="left:873px;top:772px;height:20px;background:#d8d8d8"></div>
<div class="vl" style="left:1277px;top:772px;height:20px;background:#d8d8d8"></div>
<div class="vl" style="left:368px;top:793px;height:20px;background:#d8d8d8"></div>
<div class="vl" style="left:469px;top:793px;height:20px;background:#d8d8d8"></div>
<div class="vl" style="left:570px;top:793px;height:20px;background:#d8d8d8"></div>
<div class="vl" style="left:671px;top:793px;height:20px;background:#d8d8d8"></div>
<div class="vl" style="left:772px;top:793px;height:20px;background:#d8d8d8"></div>
<div class="vl" style="left:873px;top:793px;height:20px;background:#d8d8d8"></div>
<div class="vl" style="left:974px;top:793px;height:20px;background:#d8d8d8"></div>
<div class="vl" style="left:1075px;top:793px;height:20px;background:#d8d8d8"></div>
<div class="vl" style="left:1176px;top:793px;height:20px;background:#d8d8d8"></div>
<div class="vl" style="left:1277px;top:793px;height:20px;background:#d8d8d8"></div>
<div class="vl" style="left:368px;top:814px;height:20px;background:#d8d8d8"></div>
<div class="vl" style="left:469px;top:814px;height:20px;background:#d8d8d8"></div>
<div class="vl" style="left:570px;top:814px;height:20px;background:#d8d8d8"></div>
<div class="vl" style="left:671px;top:814px;height:20px;background:#d8d8d8"></div>
<div class="vl" style="left:772px;top:814px;height:20px;background:#d8d8d8"></div>
<div class="vl" style="left:873px;top:814px;height:20px;background:#d8d8d8"></div>
<div class="vl" style="left:1075px;top:814px;height:20px;background:#d8d8d8"></div>
<div class="vl" style="left:1176px;top:814px;height:20px;background:#d8d8d8"></div>
<div class="vl" style="left:1277px;top:814px;height:20px;background:#d8d8d8"></div>
<div class="vl" style="left:368px;top:835px;height:20px;background:#d8d8d8"></div>
<div class="vl" style="left:469px;top:835px;height:20px;background:#d8d8d8"></div>
<div class="vl" style="left:570px;top:835px;height:20px;background:#d8d8d8"></div>
<div class="vl" style="left:671px;top:835px;height:20px;background:#d8d8d8"></div>
<div class="vl" style="left:772px;top:835px;height:20px;background:#d8d8d8"></div>
<div class="vl" style="left:873px;top:835px;height:20px;background:#d8d8d8"></div>
<div class="vl" style="left:974px;top:835px;height:20px;background:#d8d8d8"></div>
<div class="vl" style="left:1075px;top:835px;height:20px;background:#d8d8d8"></div>
<div class="vl" style="left:1176px;top:835px;height:20px;background:#d8d8d8"></div>
<div class="vl" style="left:1277px;top:835px;height:20px;background:#d8d8d8"></div>
<div class="vl" style="left:368px;top:856px;height:20px;background:#d8d8d8"></div>
<div class="vl" style="left:469px;top:856px;height:20px;background:#d8d8d8"></div>
<div class="vl" style="left:570px;top:856px;height:20px;background:#d8d8d8"></div>
<div class="vl" style="left:671px;top:856px;height:20px;background:#d8d8d8"></div>
<div class="vl" style="left:772px;top:856px;height:20px;background:#d8d8d8"></div>
<div class="vl" style="left:873px;top:856px;height:20px;background:#d8d8d8"></div>
<div class="vl" style="left:974px;top:856px;height:20px;background:#d8d8d8"></div>
<div class="vl" style="left:1075px;top:856px;height:20px;background:#d8d8d8"></div>
<div class="vl" style="left:1176px;top:856px;height:20px;background:#d8d8d8"></div>
<div class="vl" style="left:1277px;top:856px;height:20px;background:#d8d8d8"></div>
<div class="vl" style="left:368px;top:877px;height:10px;background:#d8d8d8"></div>
<div class="vl" style="left:469px;top:877px;height:10px;background:#d8d8d8"></div>
<div class="vl" style="left:570px;top:877px;height:10px;background:#d8d8d8"></div>
<div class="vl" style="left:671px;top:877px;height:10px;background:#d8d8d8"></div>
<div class="vl" style="left:772px;top:877px;height:10px;background:#d8d8d8"></div>
<div class="vl" style="left:873px;top:877px;height:10px;background:#d8d8d8"></div>
<div class="vl" style="left:974px;top:877px;height:10px;background:#d8d8d8"></div>
<div class="vl" style="left:1075px;top:877px;height:10px;background:#d8d8d8"></div>
<div class="vl" style="left:1176px;top:877px;height:10px;background:#d8d8d8"></div>
<div class="vl" style="left:1277px;top:877px;height:10px;background:#d8d8d8"></div>
<div class="rh" style="top:138px">1</div>
<div class="rh" style="top:163px">2</div>
<div class="rh" style="top:184px">3</div>
<div class="rh" style="top:205px">4</div>
<div class="rh" style="top:226px">5</div>
<div class="rh" style="top:247px">6</div>
<div class="rh" style="top:268px">7</div>
<div class="rh" style="top:289px">8</div>
<div class="rh" style="top:310px">9</div>
<div class="rh" style="top:331px">10</div>
<div class="rh" style="top:352px">11</div>
<div class="rh" style="top:373px">12</div>
<div class="rh" style="top:394px">13</div>
<div class="rh" style="top:415px">14</div>
<div class="rh" style="top:436px">15</div>
<div class="rh" style="top:457px">16</div>
<div class="rh" style="top:478px">17</div>
<div class="rh" style="top:499px">18</div>
<div class="rh" style="top:520px">19</div>
<div class="rh" style="top:541px">20</div>
<div class="rh" style="top:562px">21</div>
<div class="rh" style="top:583px">22</div>
<div class="rh" style="top:604px">23</div>
<div class="rh" style="top:625px">24</div>
<div class="rh" style="top:646px">25</div>
<div class="rh" style="top:667px">26</div>
<div class="rh" style="top:688px">27</div>
<div class="rh" style="top:709px">28</div>
<div class="rh" style="top:730px">29</div>
<div class="rh" style="top:751px">30</div>
<div class="rh" style="top:772px">31</div>
<div class="rh" style="top:793px">32</div>
<div class="rh" style="top:814px">33</div>
<div class="rh" style="top:835px">34</div>
<div class="rh" style="top:856px">35</div>
<div class="rh" style="top:877px">36</div>
<div class="t" style="left:47px;top:138px">Запрос</div>
<div class="t" style="left:372px;top:138px">Частотность</div>
<div class="t" style="left:473px;top:138px">Позиция Я</div>
<div class="t" style="left:574px;top:138px">Позиция G</div>
<div class="t" style="left:675px;top:138px">ГНЗ</div>
<div class="t ls" style="left:47px;top:163px;width:323px;overflow:hidden"> сайт юридических услуг</div>
<div class="t n" style="left:369px;top:163px;width:97px">13</div>
<div class="t n" style="left:470px;top:163px;width:97px">3</div>
<div class="t n" style="left:571px;top:163px;width:97px">5</div>
<div class="t" style="left:675px;top:163px">нет</div>
<div class="t ls" style="left:47px;top:184px;width:323px;overflow:hidden"> предоставление юридических услуг</div>
<div class="t n" style="left:369px;top:184px;width:97px">48</div>
<div class="t n" style="left:470px;top:184px;width:97px">2</div>
<div class="t n" style="left:571px;top:184px;width:97px">7</div>
<div class="t" style="left:675px;top:184px">нет</div>
<div class="t ls" style="left:47px;top:205px;width:323px;overflow:hidden"> оказание юридических услуг в Москве</div>
<div class="t n" style="left:369px;top:205px;width:97px">132</div>
<div class="t n" style="left:470px;top:205px;width:97px">33</div>
<div class="t n" style="left:571px;top:205px;width:97px">54</div>
<div class="t" style="left:675px;top:205px">да</div>
<div class="t ls" style="left:47px;top:226px;width:323px;overflow:hidden"> оказание юридических услуг физическим лицам</div>
<div class="t n" style="left:369px;top:226px;width:97px">55</div>
<div class="t n" style="left:470px;top:226px;width:97px">9</div>
<div class="t n" style="left:571px;top:226px;width:97px">11</div>
<div class="t" style="left:675px;top:226px">нет</div>
<div class="t ls" style="left:47px;top:247px;width:323px;overflow:hidden"> Банкротство физических лиц Москва</div>
<div class="t n" style="left:369px;top:247px;width:97px">12</div>
<div class="t n" style="left:470px;top:247px;width:97px">6</div>
<div class="t n" style="left:571px;top:247px;width:97px">78</div>
<div class="t" style="left:675px;top:247px">да</div>
<div class="t ls" style="left:47px;top:268px;width:323px;overflow:hidden"> расторжение брака</div>
<div class="t n" style="left:369px;top:268px;width:97px">480</div>
<div class="t n" style="left:470px;top:268px;width:97px">9</div>
<div class="t n" style="left:571px;top:268px;width:97px">9</div>
<div class="t" style="left:675px;top:268px">да</div>
<div class="t ls" style="left:47px;top:289px;width:323px;overflow:hidden"> установление отцовства в суде</div>
<div class="t n" style="left:369px;top:289px;width:97px">332</div>
<div class="t n" style="left:470px;top:289px;width:97px">13</div>
<div class="t n" style="left:571px;top:289px;width:97px">17</div>
<div class="t" style="left:675px;top:289px">нет</div>
<div class="t ls" style="left:47px;top:310px;width:323px;overflow:hidden"> установление отцовства Москва</div>
<div class="t n" style="left:369px;top:310px;width:97px">32</div>
<div class="t n" style="left:470px;top:310px;width:97px">46</div>
<div class="t n" style="left:571px;top:310px;width:97px">46</div>
<div class="t" style="left:675px;top:310px">да</div>
<div class="t ls" style="left:47px;top:331px;width:323px;overflow:hidden"> установление отцовства через суд</div>
<div class="t n" style="left:369px;top:331px;width:97px">45</div>
<div class="t n" style="left:470px;top:331px;width:97px">8</div>
<div class="t n" style="left:571px;top:331px;width:97px">9</div>
<div class="t" style="left:675px;top:331px">нет</div>
<div class="t ls" style="left:47px;top:352px;width:323px;overflow:hidden"> оспаривание отцовства в суде</div>
<div class="t n" style="left:369px;top:352px;width:97px">84</div>
<div class="t n" style="left:470px;top:352px;width:97px">1</div>
<div class="t n" style="left:571px;top:352px;width:97px">2</div>
<div class="t" style="left:675px;top:352px">нет</div>
<div class="t ls" style="left:47px;top:373px;width:323px;overflow:hidden"> Лишение родительских прав Москва</div>
<div class="t n" style="left:369px;top:373px;width:97px">39</div>
<div class="t n" style="left:470px;top:373px;width:97px">12</div>
<div class="t n" style="left:571px;top:373px;width:97px">7</div>
<div class="t" style="left:675px;top:373px">да</div>
<div class="t ls" style="left:47px;top:394px;width:323px;overflow:hidden"> жилищные судебные споры</div>
<div class="t n" style="left:369px;top:394px;width:97px">27</div>
<div class="t n" style="left:470px;top:394px;width:97px">45</div>
<div class="t n" style="left:571px;top:394px;width:97px">55</div>
<div class="t" style="left:675px;top:394px">да</div>
<div class="t ls" style="left:47px;top:415px;width:323px;overflow:hidden"> оформление жилья в собственность</div>
<div class="t n" style="left:369px;top:415px;width:97px">375</div>
<div class="t n" style="left:470px;top:415px;width:97px">70</div>
<div class="t n" style="left:571px;top:415px;width:97px">6</div>
<div class="t" style="left:675px;top:415px">нет</div>
<div class="t ls" style="left:47px;top:436px;width:323px;overflow:hidden"> раздел имущества земельный участок</div>
<div class="t n" style="left:369px;top:436px;width:97px">456</div>
<div class="t n" style="left:470px;top:436px;width:97px">55</div>
<div class="t n" style="left:571px;top:436px;width:97px">88</div>
<div class="t" style="left:675px;top:436px">нет</div>
<div class="t ls" style="left:47px;top:457px;width:323px;overflow:hidden"> раздел имущества квартира</div>
<div class="t n" style="left:369px;top:457px;width:97px">123</div>
<div class="t n" style="left:470px;top:457px;width:97px">16</div>
<div class="t n" style="left:571px;top:457px;width:97px">12</div>
<div class="t" style="left:675px;top:457px">нет</div>
<div class="t ls" style="left:47px;top:478px;width:323px;overflow:hidden"> консультация раздел имущества</div>
<div class="t n" style="left:369px;top:478px;width:97px">73</div>
<div class="t n" style="left:470px;top:478px;width:97px">11</div>
<div class="t n" style="left:571px;top:478px;width:97px">24</div>
<div class="t" style="left:675px;top:478px">нет</div>
<div class="t ls" style="left:47px;top:499px;width:323px;overflow:hidden"> раздел имущества автомобиль</div>
<div class="t n" style="left:369px;top:499px;width:97px">36</div>
<div class="t n" style="left:470px;top:499px;width:97px">42</div>
<div class="t n" style="left:571px;top:499px;width:97px">43</div>
<div class="t" style="left:675px;top:499px">нет</div>
<div class="t ls" style="left:47px;top:520px;width:323px;overflow:hidden"> юрист по трудовым спорам</div>
<div class="t n" style="left:369px;top:520px;width:97px">111</div>
<div class="t n" style="left:470px;top:520px;width:97px">1</div>
<div class="t n" style="left:571px;top:520px;width:97px">2</div>
<div class="t" style="left:675px;top:520px">нет</div>
<div class="t ls" style="left:47px;top:541px;width:323px;overflow:hidden"> взыскание долгов в суде</div>
<div class="t n" style="left:369px;top:541px;width:97px">63</div>
<div class="t n" style="left:470px;top:541px;width:97px">67</div>
<div class="t n" style="left:571px;top:541px;width:97px">78</div>
<div class="t" style="left:675px;top:541px">нет</div>
<div class="t ls" style="left:47px;top:562px;width:323px;overflow:hidden"> судебная практика по взысканию долга по расписке</div>
<div class="t n" style="left:369px;top:562px;width:97px">93</div>
<div class="t n" style="left:470px;top:562px;width:97px">8</div>
<div class="t n" style="left:571px;top:562px;width:97px">4</div>
<div class="t" style="left:675px;top:562px">нет</div>
<div class="t ls" style="left:47px;top:583px;width:323px;overflow:hidden"> оформление наследства</div>
<div class="t n" style="left:369px;top:583px;width:97px">83</div>
<div class="t n" style="left:470px;top:583px;width:97px">1</div>
<div class="t n" style="left:571px;top:583px;width:97px">11</div>
<div class="t" style="left:675px;top:583px">нет</div>
<div class="t ls" style="left:47px;top:604px;width:323px;overflow:hidden"> защита потребителей в суде</div>
<div class="t n" style="left:369px;top:604px;width:97px">457</div>
<div class="t n" style="left:470px;top:604px;width:97px">100</div>
<div class="t n" style="left:571px;top:604px;width:97px">100</div>
<div class="t" style="left:675px;top:604px">нет</div>
<div class="t ls" style="left:47px;top:625px;width:323px;overflow:hidden"> оформление продажи машины</div>
<div class="t n" style="left:369px;top:625px;width:97px">477</div>
<div class="t n" style="left:470px;top:625px;width:97px">5</div>
<div class="t n" style="left:571px;top:625px;width:97px">62</div>
<div class="t" style="left:675px;top:625px">нет</div>
<div class="t ls" style="left:47px;top:646px;width:323px;overflow:hidden"> банкротство организации в Москва</div>
<div class="t n" style="left:369px;top:646px;width:97px">99</div>
<div class="t n" style="left:470px;top:646px;width:97px">7</div>
<div class="t n" style="left:571px;top:646px;width:97px">7</div>
<div class="t" style="left:675px;top:646px">да</div>
<div class="t ls" style="left:47px;top:667px;width:323px;overflow:hidden"> юридическое сопровождение Москва</div>
<div class="t n" style="left:369px;top:667px;width:97px">67</div>
<div class="t n" style="left:470px;top:667px;width:97px">18</div>
<div class="t n" style="left:571px;top:667px;width:97px">8</div>
<div class="t" style="left:675px;top:667px">да</div>
<div class="t ls" style="left:47px;top:688px;width:323px;overflow:hidden"> помощь в суде</div>
<div class="t n" style="left:369px;top:688px;width:97px">809</div>
<div class="t n" style="left:470px;top:688px;width:97px">10</div>
<div class="t n" style="left:571px;top:688px;width:97px">1</div>
<div class="t" style="left:675px;top:688px">нет</div>
<div class="t ls" style="left:47px;top:709px;width:323px;overflow:hidden"> юридическая помощь в суде</div>
<div class="t n" style="left:369px;top:709px;width:97px">72</div>
<div class="t n" style="left:470px;top:709px;width:97px">7</div>
<div class="t n" style="left:571px;top:709px;width:97px">12</div>
<div class="t" style="left:675px;top:709px">нет</div>
<div class="t ls" style="left:47px;top:730px;width:323px;overflow:hidden"> представительство интересов в суде</div>
<div class="t n" style="left:369px;top:730px;width:97px">234</div>
<div class="t n" style="left:470px;top:730px;width:97px">17</div>
<div class="t n" style="left:571px;top:730px;width:97px">19</div>
<div class="t" style="left:675px;top:730px">нет</div>
<div class="t ls" style="left:47px;top:751px;width:323px;overflow:hidden"> представление в суде</div>
<div class="t n" style="left:369px;top:751px;width:97px">544</div>
<div class="t n" style="left:470px;top:751px;width:97px">64</div>
<div class="t n" style="left:571px;top:751px;width:97px">91</div>
<div class="t" style="left:675px;top:751px">нет</div>
<div class="t ls" style="left:47px;top:772px;width:323px;overflow:hidden"> рассмотрение споров в арбитражном суде Москва</div>
<div class="t n" style="left:369px;top:772px;width:97px">205</div>
<div class="t n" style="left:470px;top:772px;width:97px">80</div>
<div class="t n" style="left:571px;top:772px;width:97px">87</div>
<div class="t" style="left:675px;top:772px">да</div>
<div class="t ls" style="left:47px;top:793px;width:323px;overflow:hidden"> помощь в сУде</div>
<div class="t n" style="left:369px;top:793px;width:97px">809</div>
<div class="t n" style="left:470px;top:793px;width:97px">10</div>
<div class="t n" style="left:571px;top:793px;width:97px">1</div>
<div class="t" style="left:675px;top:793px">нет</div>
<div class="t ls" style="left:47px;top:814px;width:323px;overflow:hidden"> расторжение брака</div>
<div class="t n" style="left:369px;top:814px;width:97px">480</div>
<div class="t n" style="left:470px;top:814px;width:97px">9</div>
<div class="t n" style="left:571px;top:814px;width:97px">9</div>
<div class="t" style="left:675px;top:814px">да</div>
<div class="t ls" style="left:47px;top:835px;width:323px;overflow:hidden"> жилищные судебные споры</div>
<div class="t n" style="left:369px;top:835px;width:97px">27</div>
<div class="t n" style="left:470px;top:835px;width:97px">45</div>
<div class="t n" style="left:571px;top:835px;width:97px">55</div>
<div class="t" style="left:675px;top:835px">да</div>
<div class="t ls" style="left:47px;top:856px;width:323px;overflow:hidden"> помощь в&nbsp; суде</div>
<div class="t" id="g1" style="left:877px;top:138px">Без дублей</div>
<div class="t gtx ls" id="g2" style="left:877px;top:163px"> сайт юридических услуг</div>
<div class="t gtx ls" id="g3" style="left:877px;top:184px"> предоставление юридических услуг</div>
<div class="t gtx ls" id="g4" style="left:877px;top:205px"> оказание юридических услуг в Москве</div>
<div class="t gtx ls" id="g5" style="left:877px;top:226px"> оказание юридических услуг физическим лицам</div>
<div class="t gtx ls" id="g6" style="left:877px;top:247px"> Банкротство физических лиц Москва</div>
<div class="t gtx ls" id="g7" style="left:877px;top:268px"> расторжение брака</div>
<div class="t gtx ls" id="g8" style="left:877px;top:289px"> установление отцовства в суде</div>
<div class="t gtx ls" id="g9" style="left:877px;top:310px"> установление отцовства Москва</div>
<div class="t gtx ls" id="g10" style="left:877px;top:331px"> установление отцовства через суд</div>
<div class="t gtx ls" id="g11" style="left:877px;top:352px"> оспаривание отцовства в суде</div>
<div class="t gtx ls" id="g12" style="left:877px;top:373px"> Лишение родительских прав Москва</div>
<div class="t gtx ls" id="g13" style="left:877px;top:394px"> жилищные судебные споры</div>
<div class="t gtx ls" id="g14" style="left:877px;top:415px"> оформление жилья в собственность</div>
<div class="t gtx ls" id="g15" style="left:877px;top:436px"> раздел имущества земельный участок</div>
<div class="t gtx ls" id="g16" style="left:877px;top:457px"> раздел имущества квартира</div>
<div class="t gtx ls" id="g17" style="left:877px;top:478px"> консультация раздел имущества</div>
<div class="t gtx ls" id="g18" style="left:877px;top:499px"> раздел имущества автомобиль</div>
<div class="t gtx ls" id="g19" style="left:877px;top:520px"> юрист по трудовым спорам</div>
<div class="t gtx ls" id="g20" style="left:877px;top:541px"> взыскание долгов в суде</div>
<div class="t gtx ls" id="g21" style="left:877px;top:562px"> судебная практика по взысканию долга по расписке</div>
<div class="t gtx ls" id="g22" style="left:877px;top:583px"> оформление наследства</div>
<div class="t gtx ls" id="g23" style="left:877px;top:604px"> защита потребителей в суде</div>
<div class="t gtx ls" id="g24" style="left:877px;top:625px"> оформление продажи машины</div>
<div class="t gtx ls" id="g25" style="left:877px;top:646px"> банкротство организации в Москва</div>
<div class="t gtx ls" id="g26" style="left:877px;top:667px"> юридическое сопровождение Москва</div>
<div class="t gtx ls" id="g27" style="left:877px;top:688px"> помощь в суде</div>
<div class="t gtx ls" id="g28" style="left:877px;top:709px"> юридическая помощь в суде</div>
<div class="t gtx ls" id="g29" style="left:877px;top:730px"> представительство интересов в суде</div>
<div class="t gtx ls" id="g30" style="left:877px;top:751px"> представление в суде</div>
<div class="t gtx ls" id="g31" style="left:877px;top:772px"> рассмотрение споров в арбитражном суде Москва</div>
<div class="t gtx ls" id="g32" style="left:877px;top:793px"> помощь в сУде</div>
<div class="t gtx ls" id="g33" style="left:877px;top:814px"> помощь в&nbsp; суде</div>
<div class="a" style="left:873px;top:163px;width:102px;height:21px;border:2px solid #5279c9"></div>
<div class="a" style="left:970.5px;top:179.5px;width:7px;height:7px;background:#4a86e8;border:1px solid #fff"></div>
<div class="a" style="left:883px;top:705px;width:91px;height:2px;background:#8b1a26"></div>
<div class="a" style="left:874px;top:794px;width:114px;height:43px;border:2px solid #a3182a"></div>
<svg class="a" style="left:0;top:0" width="1315" height="887" viewBox="0 0 1315 887" ><g fill="#c30f1d" stroke="#a00a16" stroke-width="0.6" stroke-linejoin="round">
<path d="M194 100.7 L208 91.8 L207.3 96.4 L351 97 Q354.5 99 351 101.2 L207.3 105 L208 109.6 Z"/>
<path d="M875 708 L859.3 710.7 L862.5 714 L831.5 749.3 L855.3 780.8 L851.3 782.5 L866.3 788.4 L865.2 772.9 L861.7 775.2 L837.5 749 L868.5 720 L872.1 723 Z"/>
</g></svg>
</body></html>
